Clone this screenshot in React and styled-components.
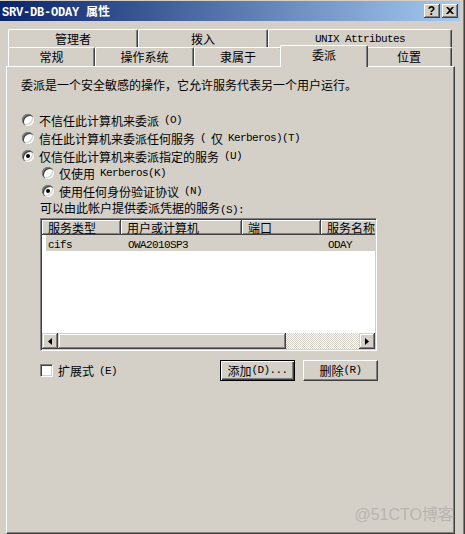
import React, { Fragment } from 'react';
import styled, { createGlobalStyle } from 'styled-components';

const GlobalStyle = createGlobalStyle`
  body {
    margin: 0;
    background: #d4d0c8;
    font-family: "Noto Sans CJK SC", "Liberation Sans", sans-serif;
    font-size: 12px;
    color: #000;
    text-autospace: no-autospace;
    text-spacing-trim: space-all;
  }
`;

// SimSun draws ASCII at half width, so the Latin runs get their own mono face
const Txt = ({ children }) => {
  const parts = String(children).split(/([\x20-\x7e]+)/);
  return parts.map((p, i) => {
    if (p === '') return null;
    if (/[\x20-\x7e]/.test(p)) return <Latin key={i}>{p}</Latin>;
    return <Fragment key={i}>{p}</Fragment>;
  });
};

const topTabs = [
  { label: '管理者', w: 130 },
  { label: '拨入', w: 130 },
  { label: 'UNIX Attributes', w: 184 },
];

const bottomTabs = [
  { label: '常规', w: 87 },
  { label: '操作系统', w: 99 },
  { label: '隶属于', w: 88 },
  { label: '委派', w: 84, active: true },
  { label: '位置', w: 86 },
];

const columns = [
  { label: '服务类型', w: 79 },
  { label: '用户或计算机', w: 121 },
  { label: '端口', w: 79 },
  { label: '服务名称', w: 79 },
];

const services = [
  ['cifs', 'OWA2010SP3', '', 'ODAY'],
];

const App = () => {
  return (
    <Fragment>
      <GlobalStyle />
      <Window>
        <TitleBar>
          <Title><Txt>SRV-DB-ODAY 属性</Txt></Title>
          <CaptionButtons>
            <CaptionButton><Help>?</Help></CaptionButton>
            <CaptionButton>
              <svg width="8" height="7" viewBox="0 0 8 7">
                <path d="M0 0h2l2 2 2-2h2L5 3.5 8 7H6L4 5 2 7H0l3-3.5z" fill="#000" />
              </svg>
            </CaptionButton>
          </CaptionButtons>
        </TitleBar>

        <Body>
          <TabRow $h={18}>
            {topTabs.map(t => (
              <Tab key={t.label} $w={t.w}><Txt>{t.label}</Txt></Tab>
            ))}
          </TabRow>
          <TabRow $h={19}>
            {bottomTabs.map(t => (
              <Tab key={t.label} $w={t.w} $active={t.active}><Txt>{t.label}</Txt></Tab>
            ))}
          </TabRow>

          <Panel>
            <Line>委派是一个安全敏感的操作，它允许服务代表另一个用户运行。</Line>

            <Options>
              <Option><Radio /><Txt>不信任此计算机来委派(O)</Txt></Option>
              <Option><Radio /><Txt>信任此计算机来委派任何服务(仅 Kerberos)(T)</Txt></Option>
              <Option><Radio $checked /><Txt>仅信任此计算机来委派指定的服务(U)</Txt></Option>
              <SubOptions>
                <Option><Radio /><Txt>仅使用 Kerberos(K)</Txt></Option>
                <Option><Radio $checked /><Txt>使用任何身份验证协议(N)</Txt></Option>
              </SubOptions>
            </Options>

            <Section>
              <Line><Txt>可以由此帐户提供委派凭据的服务(S):</Txt></Line>
              <ListBox>
                <ListHeader>
                  {columns.map(c => (
                    <HeaderCell key={c.label} $w={c.w}>{c.label}</HeaderCell>
                  ))}
                </ListHeader>
                <ListBody>
                  {services.map(row => (
                    <ListRow key={row[0]}>
                      {row.map((v, i) => (
                        <Cell key={i} $w={i === 0 ? columns[i].w - 4 : columns[i].w} $first={i === 0}>
                          <Latin>{v}</Latin>
                        </Cell>
                      ))}
                    </ListRow>
                  ))}
                </ListBody>
                <HScroll>
                  <ScrollButton>
                    <svg width="4" height="7" viewBox="0 0 4 7"><path d="M4 0v7L0 3.5z" fill="#000" /></svg>
                  </ScrollButton>
                  <Thumb />
                  <Track />
                  <ScrollButton>
                    <svg width="4" height="7" viewBox="0 0 4 7"><path d="M0 0v7l4-3.5z" fill="#000" /></svg>
                  </ScrollButton>
                </HScroll>
              </ListBox>

              <Footer>
                <CheckLabel><Checkbox /><Txt>扩展式(E)</Txt></CheckLabel>
                <Buttons>
                  <PushButton $default><Txt>添加(D)...</Txt></PushButton>
                  <PushButton><Txt>删除(R)</Txt></PushButton>
                </Buttons>
              </Footer>
            </Section>
          </Panel>
        </Body>

        <Watermark>@51CTO博客</Watermark>
      </Window>
    </Fragment>
  );
};

const Latin = styled.span`
  font-family: "Liberation Mono", "DejaVu Sans Mono", monospace;
  font-size: 11px;
  letter-spacing: -0.6px;
`;

const Window = styled.div`
  position: relative;
  width: 465px;
  height: 534px;
  box-sizing: border-box;
  padding: 1px 5px 0 0;
  background: #d4d0c8;
  box-shadow: inset -1px 0 #404040, inset -2px 0 #808080;
  display: flex;
  flex-direction: column;
  overflow: hidden;
`;

const TitleBar = styled.div`
  height: 20px;
  display: flex;
  align-items: center;
  padding-left: 2px;
  background: linear-gradient(to right, #0a246a, #a6caf0);
`;

const Title = styled.div`
  color: #fff;
  font-weight: bold;
  font-size: 12px;

  ${Latin} {
    font-size: 12px;
    font-weight: bold;
    letter-spacing: -0.2px;
  }
`;

const CaptionButtons = styled.div`
  margin-left: auto;
  display: flex;
  gap: 2px;
  padding-right: 2px;
`;

const CaptionButton = styled.div`
  width: 16px;
  height: 14px;
  box-sizing: border-box;
  background: #d4d0c8;
  box-shadow: inset -1px -1px #404040, inset 1px 1px #fff, inset -2px -2px #808080;
  display: flex;
  align-items: center;
  justify-content: center;
  padding: 0 1px 1px 0;
`;

const Help = styled.span`
  font-family: "Liberation Sans", sans-serif;
  font-weight: bold;
  font-size: 12px;
  line-height: 12px;
`;

const Body = styled.div`
  flex: 1;
  display: flex;
  flex-direction: column;
  padding: 8px 5px 0 6px;
`;

const TabRow = styled.div`
  display: flex;
  height: ${p => p.$h}px;
  padding-left: 2px;
`;

const Tab = styled.div`
  position: relative;
  flex: none;
  width: ${p => p.$active ? p.$w + 4 : p.$w}px;
  height: ${p => p.$active ? '22px' : '100%'};
  margin: ${p => p.$active ? '-2px -2px -1px' : '0'};
  box-sizing: border-box;
  background: #d4d0c8;
  border-left: 1px solid #fff;
  border-top: 1px solid #fff;
  border-right: 1px solid #404040;
  border-top-left-radius: 2px;
  border-top-right-radius: 2px;
  box-shadow: inset -1px 0 #808080;
  display: flex;
  align-items: center;
  justify-content: center;
  padding-bottom: ${p => p.$active ? 3 : 0}px;
  z-index: ${p => p.$active ? 2 : 0};
  line-height: 14px;
`;

const Panel = styled.div`
  position: relative;
  z-index: 1;
  flex: 1;
  box-sizing: border-box;
  border: 1px solid;
  border-color: #fff #404040 #404040 #fff;
  box-shadow: inset -1px -1px #808080;
  padding: 10px 0 0 14px;
  display: flex;
  flex-direction: column;
`;

const Line = styled.div`
  height: 16px;
  line-height: 16px;
  white-space: nowrap;
`;

const Options = styled.div`
  margin-top: 18px;
  padding-left: 1px;
  display: flex;
  flex-direction: column;
`;

const SubOptions = styled.div`
  margin-top: -1px;
  padding-left: 20px;
  display: flex;
  flex-direction: column;
`;

const Option = styled.div`
  height: 18px;
  display: flex;
  align-items: center;
  gap: 5px;
  white-space: nowrap;
`;

const Radio = styled.span`
  position: relative;
  flex: none;
  width: 12px;
  height: 12px;
  border-radius: 50%;
  background: #fff;
  box-shadow: inset 1px 1px 0 #808080, inset 2px 2px 0 #404040,
    inset -1px -1px 0 #fff, inset -2px -2px 0 #d4d0c8, 0 0 0 0.5px #c0c0c0;

  &::after {
    content: '';
    display: ${p => p.$checked ? 'block' : 'none'};
    position: absolute;
    left: 4px;
    top: 4px;
    width: 4px;
    height: 4px;
    border-radius: 50%;
    background: #000;
  }
`;

const Section = styled.div`
  margin-left: 19px;
  width: 338px;
  display: flex;
  flex-direction: column;
`;

const ListBox = styled.div`
  margin-top: 2px;
  width: 337px;
  height: 133px;
  box-sizing: border-box;
  border: 1px solid;
  border-color: #808080 #fff #fff #808080;
  box-shadow: inset 1px 1px #404040, inset -1px -1px #d4d0c8;
  padding: 1px;
  background: #fff;
  display: flex;
  flex-direction: column;
  overflow: hidden;
`;

const ListHeader = styled.div`
  display: flex;
  height: 15px;
  flex: none;
  overflow-x: clip;
`;

const HeaderCell = styled.div`
  flex: none;
  width: ${p => p.$w}px;
  height: 15px;
  box-sizing: border-box;
  background: #d4d0c8;
  box-shadow: inset -1px -1px #404040, inset 1px 1px #fff, inset -2px -2px #808080;
  padding-left: 6px;
  line-height: 15px;
  white-space: nowrap;
`;

const ListBody = styled.div`
  flex: 1;
  background: #fff;
  overflow: hidden;
`;

const ListRow = styled.div`
  display: flex;
  height: 16px;
  margin-left: 4px;
  background: #d4d0c8;
  width: max-content;
`;

const Cell = styled.div`
  flex: none;
  width: ${p => p.$w}px;
  box-sizing: border-box;
  padding-left: ${p => p.$first ? 2 : 7}px;
  line-height: 16px;
  white-space: nowrap;
`;

const HScroll = styled.div`
  flex: none;
  height: 16px;
  display: flex;
`;

const raised = `
  background: #d4d0c8;
  box-shadow: inset -1px -1px #404040, inset 1px 1px #d4d0c8, inset -2px -2px #808080, inset 2px 2px #fff;
`;

const ScrollButton = styled.div`
  width: 16px;
  height: 16px;
  flex: none;
  box-sizing: border-box;
  ${raised}
  display: flex;
  align-items: center;
  justify-content: center;
`;

const Thumb = styled.div`
  width: 228px;
  height: 16px;
  flex: none;
  ${raised}
`;

const Track = styled.div`
  flex: 1;
  background: repeating-conic-gradient(#d4d0c8 0 25%, #fff 0 50%) 0 0 / 2px 2px;
`;

const Footer = styled.div`
  margin-top: 9px;
  height: 21px;
  display: flex;
  align-items: center;
`;

const CheckLabel = styled.div`
  display: flex;
  align-items: center;
  gap: 5px;
  white-space: nowrap;
`;

const Checkbox = styled.span`
  flex: none;
  width: 13px;
  height: 13px;
  box-sizing: border-box;
  background: #fff;
  border: 1px solid;
  border-color: #808080 #fff #fff #808080;
  box-shadow: inset 1px 1px #404040, inset -1px -1px #d4d0c8;
`;

const Buttons = styled.div`
  margin-left: auto;
  display: flex;
  gap: 8px;
`;

const PushButton = styled.div`
  width: 75px;
  height: 21px;
  box-sizing: border-box;
  background: #d4d0c8;
  border: 1px solid;
  border-color: ${p => p.$default ? '#000' : '#fff #404040 #404040 #fff'};
  box-shadow: ${p => p.$default
    ? 'inset 1px 1px #fff, inset -1px -1px #404040, inset -2px -2px #808080'
    : 'inset -1px -1px #808080'};
  display: flex;
  align-items: center;
  justify-content: center;
  white-space: nowrap;
  padding-bottom: 1px;
`;

const Watermark = styled.div`
  position: absolute;
  right: 11px;
  bottom: 9px;
  font-family: "Liberation Sans", "Noto Sans CJK SC", sans-serif;
  font-size: 16px;
  color: #b9b5ae;
  white-space: nowrap;
  z-index: 3;
`;

export default App;
